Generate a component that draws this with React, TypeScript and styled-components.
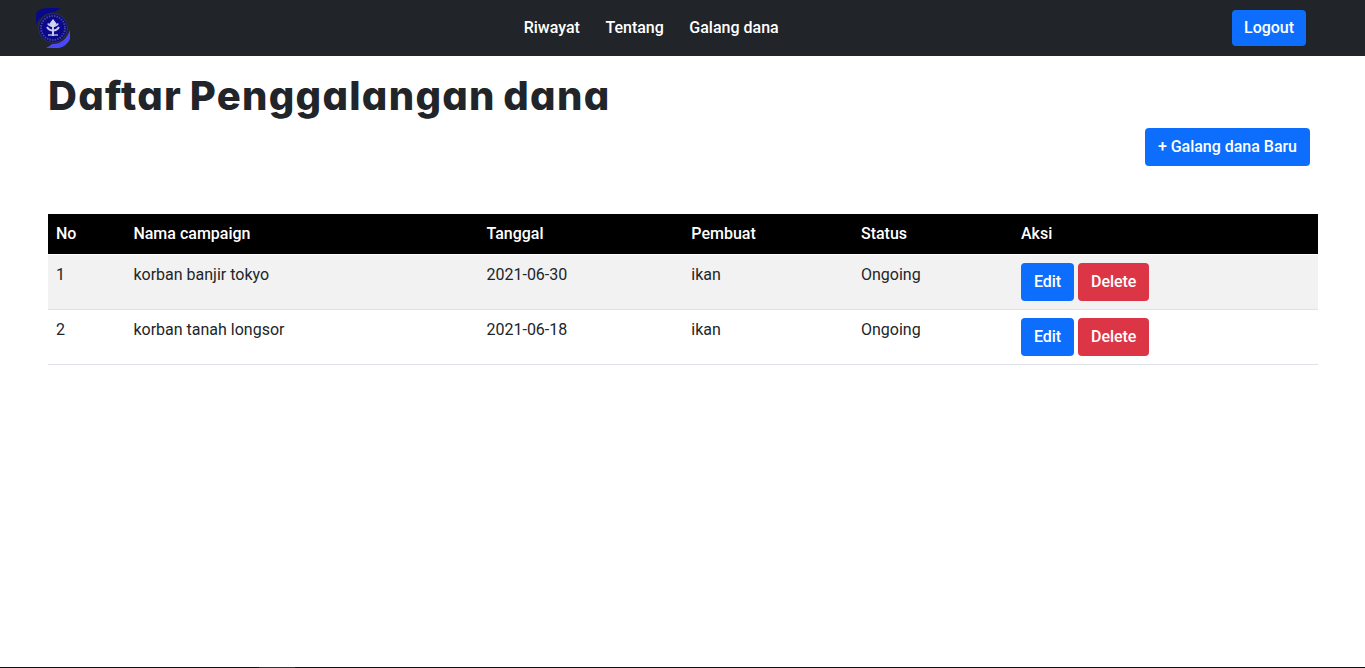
import React from "react";
import styled, { createGlobalStyle } from "styled-components";

const GlobalStyle = createGlobalStyle`
  *, *::before, *::after { box-sizing: border-box; }
  body {
    margin: 0;
    background: #fff;
    color: #212529;
    font-family: Roboto, "Liberation Sans", sans-serif;
    font-size: 16px;
    line-height: 24px;
  }
`;

const Page = styled.div`
  display: flex;
  flex-direction: column;
  height: 668px;
  overflow: hidden;
`;

const Navbar = styled.header`
  display: grid;
  grid-template-columns: 1fr auto 1fr;
  align-items: center;
  flex: none;
  height: 56px;
  padding: 0 59px 0 36px;
  background: #212529;
`;

const Nav = styled.nav`
  display: flex;
  gap: 25.5px;
  margin-right: 39.6px;
`;

const NavLink = styled.a`
  color: #fff;
  font-weight: 500;
`;

const Button = styled.button<{ $variant?: "primary" | "danger"; $compact?: boolean }>`
  height: ${({ $compact }) => ($compact ? 36 : 38)}px;
  padding: 0 ${({ $compact }) => ($compact ? 12 : 13)}px 1px;
  border: 0;
  border-radius: 4px;
  background: ${({ $variant }) => ($variant === "danger" ? "#dc3545" : "#0d6efd")};
  color: #fff;
  font: 500 16px/24px Roboto, "Liberation Sans", sans-serif;
  letter-spacing: -0.02px;
  white-space: nowrap;
`;

const NavEnd = styled.div`
  display: flex;
  justify-content: flex-end;
`;

const Main = styled.main`
  flex: 1;
  padding: 16px 47px 0 48px;
`;

const Title = styled.h1`
  margin: 0 0 8px;
  font-family: Inter, sans-serif;
  font-feature-settings: "cv11";
  font-size: 40px;
  font-weight: 800;
  letter-spacing: 1.3px;
  word-spacing: -2.5px;
  line-height: 48px;
  white-space: nowrap;
`;

const Toolbar = styled.div`
  display: flex;
  justify-content: flex-end;
  padding-right: 8px;
  margin-bottom: 48px;
`;

const Table = styled.table`
  width: 1270px;
  table-layout: fixed;
  border-collapse: separate;
  border-spacing: 0;
`;

const HeadCell = styled.th`
  height: 40px;
  padding: 0 8px 1px;
  background: #000;
  color: #fff;
  font-weight: 500;
  text-align: left;
`;

const Row = styled.tr<{ $striped: boolean }>`
  background: ${({ $striped }) => ($striped ? "#f2f2f2" : "#fff")};
`;

const Cell = styled.td`
  height: 55px;
  padding: 8px;
  border-bottom: 1px solid #dee2e6;
  vertical-align: top;
`;

const HeadRule = styled.td`
  height: 1px;
  padding: 0;
  background: #fff;
`;

const Actions = styled.div`
  display: flex;
  gap: 4px;

  ${Button} {
    letter-spacing: -0.07px;
  }
`;

const BottomEdge = styled.footer`
  display: flex;
  flex: none;
  height: 1px;
  padding-left: 259px;
  background: #111;
`;

const EdgeMark = styled.span`
  width: 36px;
  height: 1px;
  background: #333;
`;

const Logo = () => (
  <svg width="35" height="40" viewBox="0 0 35 40" aria-hidden="true">
    <path d="M0 16V6Q2 1 10 0H25Q22 1 19 4Q7 4 0 16Z" fill="#08088a" />
    <path d="M34 22V31Q31 38 23 40H10Q14 38 16 36Q29 36 34 22Z" fill="#4b48f5" />
    <circle cx="17" cy="20" r="14.5" fill="#0b0a7c" stroke="#34355f" strokeWidth="0.8" />
    <circle cx="17" cy="20" r="12" fill="none" stroke="#7477ae" strokeWidth="2" strokeDasharray="1.4 1.2" opacity="0.55" />
    <circle cx="17" cy="20" r="9.8" fill="#0a0891" />
    <g stroke="#c5c8e8" fill="none" strokeWidth="2">
      <path d="M17 12V28" />
      <path d="M12 15.5Q13 18 17 18Q21 18 22 15.5M11 19Q13 22.5 17 22.5Q21 22.5 23 19" />
      <path d="M12 27H22" strokeWidth="1.3" />
    </g>
    <path d="M17 11L20.5 15.5L18.5 19H15.5L13.5 15.5Z" fill="#d3d6ed" />
  </svg>
);

const links = ["Riwayat", "Tentang", "Galang dana"];

const columns = [
  { label: "No", width: 77.4 },
  { label: "Nama campaign", width: 353.1 },
  { label: "Tanggal", width: 204.8 },
  { label: "Pembuat", width: 169.7 },
  { label: "Status", width: 160 },
  { label: "Aksi", width: 305 },
];

const campaigns = [
  { name: "korban banjir tokyo", date: "2021-06-30", author: "ikan", status: "Ongoing" },
  { name: "korban tanah longsor", date: "2021-06-18", author: "ikan", status: "Ongoing" },
];

export default function App() {
  return (
    <Page>
      <GlobalStyle />
      <Navbar>
        <Logo />
        <Nav>
          {links.map((link) => (
            <NavLink key={link}>{link}</NavLink>
          ))}
        </Nav>
        <NavEnd>
          <Button $compact>Logout</Button>
        </NavEnd>
      </Navbar>
      <Main>
        <Title>Daftar Penggalangan dana</Title>
        <Toolbar>
          <Button>+ Galang dana Baru</Button>
        </Toolbar>
        <Table>
          <colgroup>
            {columns.map((c) => (
              <col key={c.label} width={c.width} />
            ))}
          </colgroup>
          <thead>
            <tr>
              {columns.map((c) => (
                <HeadCell key={c.label}>{c.label}</HeadCell>
              ))}
            </tr>
          </thead>
          <tbody>
            <tr>
              <HeadRule colSpan={6} />
            </tr>
            {campaigns.map((c, i) => (
              <Row key={c.name} $striped={i % 2 === 0}>
                <Cell>{i + 1}</Cell>
                <Cell>{c.name}</Cell>
                <Cell>{c.date}</Cell>
                <Cell>{c.author}</Cell>
                <Cell>{c.status}</Cell>
                <Cell>
                  <Actions>
                    <Button>Edit</Button>
                    <Button $variant="danger">Delete</Button>
                  </Actions>
                </Cell>
              </Row>
            ))}
          </tbody>
        </Table>
      </Main>
      <BottomEdge>
        <EdgeMark />
      </BottomEdge>
    </Page>
  );
}
